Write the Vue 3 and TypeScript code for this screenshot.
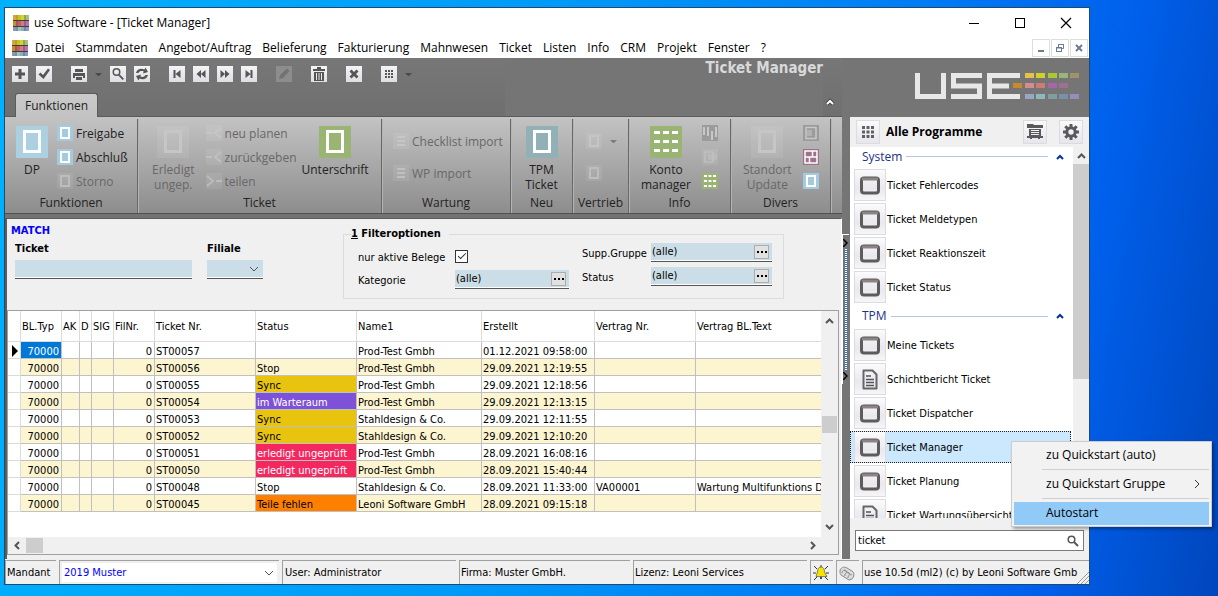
<script setup lang="ts">
import { ref } from 'vue'

interface Row {
  nr: string
  status: string
  tone: string
  name: string
  date: string
  contract: string
  text: string
}

interface Program {
  label: string
  icon: 'window' | 'document'
  selected?: boolean
}

const menus = ['Datei', 'Stammdaten', 'Angebot/Auftrag', 'Belieferung', 'Fakturierung', 'Mahnwesen', 'Ticket', 'Listen', 'Info', 'CRM', 'Projekt', 'Fenster', '?']

const glyphs: Record<string, string> = {
  plus: 'M6.500 3h3v3.500H13v3H9.500V13h-3V9.500H3v-3h3.500z',
  check: 'M2.500 8.500l2-2L7 9l5-6.500 2 1.500-6.500 9z',
  print: 'M4 3h8v3H4zM2 7h12v5h-2v-2H4v2H2zM5 11h6v3H5z',
  search: 'M6.500 2a4 4 0 1 0 0 8 4 4 0 0 0 0-8zm0 1.500a2.500 2.500 0 1 1 0 5 2.500 2.500 0 0 1 0-5zM8.500 9.800l1.300-1.300L14 12.700 12.700 14z',
  refresh: 'M2 7c1-4 5-5 8.500-3.500L11.500 1.500 14 6 9 7.500l.7-2C7.500 4.500 5.500 5 4.500 7zM14 9c-1 4-5 5-8.500 3.500L4.500 14.500 2 10l5-1.500-.7 2c2.200 1 4.200.5 5.200-1.500z',
  first: 'M4.500 4h2v8h-2zM11.500 4v8l-5-4z',
  prev: 'M8 4v8L3.500 8zM12.500 4v8L8 8z',
  next: 'M3.500 4v8L8 8zM8 4v8l4.500-4z',
  last: 'M9.500 4h2v8h-2zM4.500 4v8l5-4z',
  edit: 'M3 13l1-4 7-6.500 2.500 2.500L7 12z',
  trash: 'M6 1h4v2h4v2H2V3h4zM3 6h10v9H3zM5 7v7h1V7zM7.500 7v7h1V7zM10 7v7h1V7z',
  close: 'M3.500 5.500l2-2L8 6l2.500-2.500 2 2L10 8l2.500 2.500-2 2L8 10l-2.500 2.500-2-2L6 8z',
  grid: 'M4 4h2v2H4zM7 4h2v2H7zM10 4h2v2h-2zM4 7h2v2H4zM7 7h2v2H7zM10 7h2v2h-2zM4 10h2v2H4zM7 10h2v2H7zM10 10h2v2h-2z',
}

const toolGroups = [
  [{ g: 'plus', t: 'Neu' }, { g: 'check', t: 'Speichern' }],
  [{ g: 'print', t: 'Drucken', caret: true }, { g: 'search', t: 'Suchen' }, { g: 'refresh', t: 'Aktualisieren' }],
  [{ g: 'first', t: 'Erster' }, { g: 'prev', t: 'Zurück' }, { g: 'next', t: 'Weiter' }, { g: 'last', t: 'Letzter' }],
  [{ g: 'edit', t: 'Bearbeiten', off: true }],
  [{ g: 'trash', t: 'Löschen' }],
  [{ g: 'close', t: 'Abbrechen' }],
  [{ g: 'grid', t: 'Raster', caret: true }],
] as { g: string; t: string; caret?: boolean; off?: boolean }[][]

const logoBars: [number, number, string][] = [
  [110, 0, '#e8bf49'], [121, 0, '#cfd124'], [133, 0, '#a9c832'], [144, 0, '#98b67a'], [155, 0, '#a0926a'],
  [98, 10, '#c88b27'], [110, 10, '#d48c8c'], [121, 10, '#d07a72'], [133, 10, '#a865a8'], [144, 10, '#a07090'],
  [110, 21, '#98a8c4'], [121, 21, '#8fb8b8'], [133, 21, '#7ca0a0'], [144, 21, '#7890a8'], [155, 21, '#9090b8'],
]

const appTiles: [number, number, number, string][] = [
  [0, 0, 3, '#d9a43b'], [3, 0, 2, '#b8a030'], [5, 0, 3, '#c7c31f'], [8, 0, 3, '#d2d62c'], [11, 0, 2, '#8aa860'], [13, 0, 3, '#a8c07c'],
  [0, 6, 3, '#c98a2a'], [3, 6, 2, '#a05a50'], [5, 6, 3, '#c0616a'], [8, 6, 3, '#cf7d84'], [11, 6, 2, '#a05a98'], [13, 6, 3, '#b478a8'],
  [0, 12, 3, '#8a97b8'], [3, 12, 2, '#7890a0'], [5, 12, 3, '#9cc0c4'], [8, 12, 3, '#88b0b4'], [11, 12, 2, '#7088a8'], [13, 12, 3, '#8e9ac0'],
]

const rows: Row[] = [
  { nr: 'ST00057', status: '', tone: '', name: 'Prod-Test Gmbh', date: '01.12.2021 09:58:00', contract: '', text: '' },
  { nr: 'ST00056', status: 'Stop', tone: '', name: 'Prod-Test Gmbh', date: '29.09.2021 12:19:55', contract: '', text: '' },
  { nr: 'ST00055', status: 'Sync', tone: 'sync', name: 'Prod-Test Gmbh', date: '29.09.2021 12:18:56', contract: '', text: '' },
  { nr: 'ST00054', status: 'im Warteraum', tone: 'wait', name: 'Prod-Test Gmbh', date: '29.09.2021 12:13:15', contract: '', text: '' },
  { nr: 'ST00053', status: 'Sync', tone: 'sync', name: 'Stahldesign & Co.', date: '29.09.2021 12:11:55', contract: '', text: '' },
  { nr: 'ST00052', status: 'Sync', tone: 'sync', name: 'Stahldesign & Co.', date: '29.09.2021 12:10:20', contract: '', text: '' },
  { nr: 'ST00051', status: 'erledigt ungeprüft', tone: 'done', name: 'Prod-Test Gmbh', date: '28.09.2021 16:08:16', contract: '', text: '' },
  { nr: 'ST00050', status: 'erledigt ungeprüft', tone: 'done', name: 'Prod-Test Gmbh', date: '28.09.2021 15:40:44', contract: '', text: '' },
  { nr: 'ST00048', status: 'Stop', tone: '', name: 'Stahldesign & Co.', date: '28.09.2021 11:33:00', contract: 'VA00001', text: 'Wartung Multifunktions Dr' },
  { nr: 'ST00045', status: 'Teile fehlen', tone: 'missing', name: 'Leoni Software GmbH', date: '28.09.2021 09:15:18', contract: '', text: '' },
]

const sections: { title: string; items: Program[] }[] = [
  {
    title: 'System',
    items: [
      { label: 'Ticket Fehlercodes', icon: 'window' },
      { label: 'Ticket Meldetypen', icon: 'window' },
      { label: 'Ticket Reaktionszeit', icon: 'window' },
      { label: 'Ticket Status', icon: 'window' },
    ],
  },
  {
    title: 'TPM',
    items: [
      { label: 'Meine Tickets', icon: 'window' },
      { label: 'Schichtbericht Ticket', icon: 'document' },
      { label: 'Ticket Dispatcher', icon: 'window' },
      { label: 'Ticket Manager', icon: 'window', selected: true },
      { label: 'Ticket Planung', icon: 'window' },
      { label: 'Ticket Wartungsübersicht', icon: 'document' },
    ],
  },
]

const ticket = ref('')
const activeOnly = ref(true)
const kategorie = ref('(alle)')
const gruppe = ref('(alle)')
const status = ref('(alle)')
const search = ref('ticket')
</script>

<template>
  <div class="desktop">
    <div class="window">
      <header class="titlebar">
        <svg class="appicon" viewBox="0 0 16 16"><rect width="16" height="16" fill="#4a3a35" /><rect v-for="(t, i) in appTiles" :key="i" :x="t[0]" :y="t[1]" :width="t[2]" :height="t[1] === 12 ? 4 : 5" :fill="t[3]" /></svg>
        <span class="caption">use Software - [Ticket Manager]</span>
        <button class="sysbtn" aria-label="Minimieren"><svg width="12" height="12" viewBox="0 0 12 12"><path d="M1 6.500h10" stroke="#000" /></svg></button>
        <button class="sysbtn" aria-label="Maximieren"><svg width="12" height="12" viewBox="0 0 12 12"><rect x="1.500" y="1.500" width="9" height="9" fill="none" stroke="#000" /></svg></button>
        <button class="sysbtn" aria-label="Schließen"><svg width="12" height="12" viewBox="0 0 12 12"><path d="M1 1l10 10M11 1L1 11" stroke="#000" stroke-width="1.200" /></svg></button>
      </header>

      <nav class="menubar">
        <svg class="appicon" viewBox="0 0 16 16"><rect width="16" height="16" fill="#4a3a35" /><rect v-for="(t, i) in appTiles" :key="i" :x="t[0]" :y="t[1]" :width="t[2]" :height="t[1] === 12 ? 4 : 5" :fill="t[3]" /></svg>
        <button v-for="m in menus" :key="m" class="menu">{{ m }}</button>
        <div class="mdi">
          <button aria-label="Fenster minimieren"><svg width="10" height="10" viewBox="0 0 10 10"><path d="M2 8h6" stroke="#6c7d8e" stroke-width="2" /></svg></button>
          <button aria-label="Fenster wiederherstellen"><svg width="10" height="10" viewBox="0 0 10 10" fill="none" stroke="#6c7d8e"><path d="M3.500 4V1.500h5v4H7M3 1.500h6" /><rect x="1.500" y="4.500" width="5" height="4" /><path d="M1 5h6" /></svg></button>
          <button aria-label="Fenster schließen"><svg width="10" height="10" viewBox="0 0 10 10"><path d="M2 2l6 6M8 2L2 8" stroke="#6c7d8e" stroke-width="2" /></svg></button>
        </div>
      </nav>

      <div class="body">
        <main class="left">
          <div class="head">
            <div class="head-main">
              <div class="toolbar">
                <div v-for="(grp, gi) in toolGroups" :key="gi" class="tools">
                  <template v-for="b in grp" :key="b.g">
                    <button class="tool" :class="{ off: b.off }" :disabled="b.off" :aria-label="b.t"><svg viewBox="0 0 16 16"><path fill-rule="evenodd" :d="glyphs[b.g]" /></svg></button>
                    <span v-if="b.caret" class="caret"></span>
                  </template>
                </div>
              </div>
              <button class="tab">Funktionen</button>
            </div>
            <h1>Ticket Manager</h1>
            <button class="collapse" aria-label="Menüband reduzieren"><svg width="10" height="8" viewBox="0 0 10 8"><path d="M2 6l3-3 3 3" fill="none" stroke="#444" stroke-width="4" /><path d="M2 6l3-3 3 3" fill="none" stroke="#fff" stroke-width="2" /></svg></button>
          </div>

          <div class="ribbon">
            <section class="group g-fn">
              <div class="cmds">
                <button class="big"><svg class="i32" viewBox="0 0 32 32"><rect width="32" height="32" fill="#add0e0" /><rect x="8.500" y="5.500" width="15" height="20" fill="none" stroke="#fff" stroke-width="3" /></svg><span>DP</span></button>
                <div class="stack">
                  <button class="small"><svg class="i16" viewBox="0 0 16 16"><rect width="16" height="16" fill="#a4cbdd" /><rect x="4" y="3" width="8" height="10" fill="none" stroke="#fff" stroke-width="2" /></svg>Freigabe</button>
                  <button class="small"><svg class="i16" viewBox="0 0 16 16"><rect width="16" height="16" fill="#a4cbdd" /><rect x="4" y="3" width="8" height="10" fill="none" stroke="#fff" stroke-width="2" /></svg>Abschluß</button>
                  <button class="small" disabled><svg class="i16 dim" viewBox="0 0 16 16"><rect width="16" height="16" /><rect x="4" y="3" width="8" height="10" fill="none" stroke="#bdbdbd" stroke-width="2" /></svg>Storno</button>
                </div>
              </div>
              <h2>Funktionen</h2>
            </section>

            <section class="group g-ticket">
              <div class="cmds">
                <button class="big" disabled><svg class="i32 dim" viewBox="0 0 32 32"><rect width="32" height="32" /><rect x="8.500" y="5.500" width="15" height="20" fill="none" stroke="#c6c6c6" stroke-width="3" /></svg><span>Erledigt<br />ungep.</span></button>
                <div class="stack">
                  <button class="small" disabled><svg class="i16 dim" viewBox="0 0 16 16"><rect width="16" height="16" /><path d="M0 8h6M15 3L9 8l6 5" fill="none" stroke="#c6c6c6" stroke-width="2" /></svg>neu planen</button>
                  <button class="small" disabled><svg class="i16 dim" viewBox="0 0 16 16"><rect width="16" height="16" /><path d="M0 8h6M15 3L9 8l6 5" fill="none" stroke="#c0c0c0" stroke-width="2" /></svg>zurückgeben</button>
                  <button class="small" disabled><svg class="i16 dim" viewBox="0 0 16 16"><rect width="16" height="16" /><path d="M16 8h-6M1 3l6 5-6 5" fill="none" stroke="#bcbcbc" stroke-width="2" /></svg>teilen</button>
                </div>
                <button class="big sign"><svg class="i32" viewBox="0 0 32 32"><rect width="32" height="32" fill="#9ab474" /><rect x="8.500" y="5.500" width="15" height="20" fill="none" stroke="#fff" stroke-width="3" /></svg><span>Unterschrift</span></button>
              </div>
              <h2>Ticket</h2>
            </section>

            <section class="group g-wartung">
              <div class="cmds">
                <div class="stack two">
                  <button class="small" disabled><svg class="i16 dim" viewBox="0 0 16 16"><rect width="16" height="16" /><path d="M4 4h8M4 8h8M4 12h8" stroke="#c6c6c6" stroke-width="2" /></svg>Checklist import</button>
                  <button class="small" disabled><svg class="i16 dim" viewBox="0 0 16 16"><rect width="16" height="16" /><path d="M4 4h8M4 8h8M4 12h8" stroke="#c0c0c0" stroke-width="2" /></svg>WP import</button>
                </div>
              </div>
              <h2>Wartung</h2>
            </section>

            <section class="group g-neu">
              <div class="cmds">
                <button class="big"><svg class="i32" viewBox="0 0 32 32"><rect width="32" height="32" fill="#91b1b7" /><rect x="8.500" y="5.500" width="15" height="20" fill="none" stroke="#fff" stroke-width="3" /></svg><span>TPM<br />Ticket</span></button>
              </div>
              <h2>Neu</h2>
            </section>

            <section class="group g-vertrieb">
              <div class="cmds">
                <div class="stack two">
                  <button class="small" disabled aria-label="Angebot"><svg class="i16 dim" viewBox="0 0 16 16"><rect width="16" height="16" /><rect x="4" y="3" width="8" height="10" fill="none" stroke="#c6c6c6" stroke-width="2" /></svg><span class="caret light"></span></button>
                  <button class="small" disabled aria-label="Auftrag"><svg class="i16 dim" viewBox="0 0 16 16"><rect width="16" height="16" /><rect x="4" y="3" width="8" height="10" fill="none" stroke="#bebebe" stroke-width="2" /></svg></button>
                </div>
              </div>
              <h2>Vertrieb</h2>
            </section>

            <section class="group g-info">
              <div class="cmds">
                <button class="big"><svg class="i32" viewBox="0 0 32 32"><rect width="32" height="32" fill="#9ab474" /><path d="M4 6.500h24M4 15.500h24M4 24.500h24" stroke="#fff" stroke-width="3" stroke-dasharray="6 3" /></svg><span>Konto<br />manager</span></button>
                <div class="stack">
                  <button class="small" disabled aria-label="Statistik"><svg class="i16 dark" viewBox="0 0 16 16"><rect width="16" height="16" /><path d="M2 2v8M6 2v9M10 6v9M14 2v10" stroke="#c8c8c8" stroke-width="2" /></svg></button>
                  <button class="small" disabled aria-label="Export"><svg class="i16 dim" viewBox="0 0 16 16"><rect width="16" height="16" /><path d="M11 3H3v10h8M6 6h5M11 6h4M6 8h9M6 10h9M11 3v10" fill="none" stroke="#c4c4c4" stroke-width="1.200" /></svg></button>
                  <button class="small" aria-label="Raster"><svg class="i16" viewBox="0 0 16 16"><rect width="16" height="16" fill="#9ab474" /><path d="M2 3h12M2 8h12M2 13h12" stroke="#fff" stroke-width="2" stroke-dasharray="3 1.500" /></svg></button>
                </div>
              </div>
              <h2>Info</h2>
            </section>

            <section class="group g-divers">
              <div class="cmds">
                <button class="big" disabled><svg class="i32 dim" viewBox="0 0 32 32"><rect width="32" height="32" /><rect x="8.500" y="5.500" width="15" height="20" fill="none" stroke="#c6c6c6" stroke-width="3" /></svg><span>Standort<br />Update</span></button>
                <div class="stack">
                  <button class="small" disabled aria-label="Protokoll"><svg class="i16 dark" viewBox="0 0 16 16"><rect width="16" height="16" /><rect x="3" y="2.500" width="10" height="11" fill="none" stroke="#c8c8c8" stroke-width="1.500" /><path d="M4 6h5M4 8h5M4 10h5" stroke="#c8c8c8" /></svg></button>
                  <button class="small" aria-label="Kacheln"><svg class="i16" viewBox="0 0 16 16"><rect width="16" height="16" fill="#a0708c" /><rect x="2" y="2" width="12" height="12" fill="none" stroke="#fff" stroke-width="1.500" /><path d="M9.500 2v6M6.500 8v6M2 8h12" stroke="#fff" stroke-width="1.500" /></svg></button>
                  <button class="small" aria-label="Blatt"><svg class="i16" viewBox="0 0 16 16"><rect width="16" height="16" fill="#a4cbdd" /><rect x="4" y="3" width="8" height="10" fill="none" stroke="#fff" stroke-width="2" /></svg></button>
                </div>
              </div>
              <h2>Divers</h2>
            </section>
          </div>

          <div class="sheet">
            <form class="filter" @submit.prevent>
              <div class="match">
                <strong class="blue">MATCH</strong>
                <div class="pair">
                  <div class="field"><label for="ticket">Ticket</label><input id="ticket" v-model="ticket" class="flat" type="text" /></div>
                  <div class="field narrow"><label for="filiale">Filiale</label>
                    <div class="drop"><select id="filiale"><option></option></select><svg width="10" height="6" viewBox="0 0 10 6"><path d="M1 1l4 4 4-4" fill="none" stroke="#555" /></svg></div>
                  </div>
                </div>
              </div>
              <fieldset>
                <legend><u>1</u> Filteroptionen</legend>
                <div class="opts a">
                  <label for="aktiv">nur aktive Belege</label><input id="aktiv" v-model="activeOnly" type="checkbox" />
                  <label for="kat">Kategorie</label><div class="lookup"><input id="kat" v-model="kategorie" type="text" /><button type="button" aria-label="Kategorie wählen"><i></i><i></i><i></i></button></div>
                </div>
                <div class="opts b">
                  <label for="grp">Supp.Gruppe</label><div class="lookup"><input id="grp" v-model="gruppe" type="text" /><button type="button" aria-label="Gruppe wählen"><i></i><i></i><i></i></button></div>
                  <label for="sta">Status</label><div class="lookup"><input id="sta" v-model="status" type="text" /><button type="button" aria-label="Status wählen"><i></i><i></i><i></i></button></div>
                </div>
              </fieldset>
            </form>

            <div class="gridbox">
              <div class="gridmain">
                <div class="gridview">
                  <table>
                    <colgroup><col class="c0" /><col class="c1" /><col class="c2" /><col class="c3" /><col class="c4" /><col class="c5" /><col class="c6" /><col class="c6" /><col class="c8" /><col class="c9" /><col class="c6" /><col /></colgroup>
                    <thead>
                      <tr><th></th><th>BL.Typ</th><th>AK</th><th>D</th><th>SIG</th><th>FilNr.</th><th>Ticket Nr.</th><th>Status</th><th>Name1</th><th>Erstellt</th><th>Vertrag Nr.</th><th>Vertrag BL.Text</th></tr>
                    </thead>
                    <tbody>
                      <tr v-for="(r, i) in rows" :key="r.nr">
                        <td class="mark"><svg v-if="i === 0" width="6" height="12" viewBox="0 0 6 12"><path d="M0 0l6 6-6 6z" /></svg></td>
                        <td class="num" :class="{ current: i === 0 }">70000</td><td></td><td></td><td></td><td class="num">0</td>
                        <td>{{ r.nr }}</td><td :class="r.tone">{{ r.status }}</td><td>{{ r.name }}</td><td>{{ r.date }}</td><td>{{ r.contract }}</td><td>{{ r.text }}</td>
                      </tr>
                    </tbody>
                  </table>
                </div>
                <div class="vscroll">
                  <svg width="9" height="6" viewBox="0 0 9 6"><path d="M1 5l3.500-3.500L8 5" fill="none" stroke="#555" stroke-width="2" /></svg>
                  <div class="track"><div class="thumb"></div></div>
                  <svg width="9" height="6" viewBox="0 0 9 6"><path d="M1 1l3.500 3.500L8 1" fill="none" stroke="#555" stroke-width="2" /></svg>
                </div>
              </div>
              <div class="hscroll">
                <svg width="6" height="9" viewBox="0 0 6 9"><path d="M5 1L1.500 4.500 5 8" fill="none" stroke="#555" stroke-width="2" /></svg>
                <div class="hthumb"></div>
                <svg class="end" width="6" height="9" viewBox="0 0 6 9"><path d="M1 1l3.500 3.500L1 8" fill="none" stroke="#555" stroke-width="2" /></svg>
              </div>
            </div>
          </div>
        </main>

        <div class="split">
          <div class="grip">
            <svg width="5" height="8" viewBox="0 0 5 8"><path d="M0 0l4 4-4 4" fill="none" stroke="#000" stroke-width="1.500" /></svg>
            <div class="dots"></div>
            <svg width="5" height="8" viewBox="0 0 5 8"><path d="M0 0l4 4-4 4" fill="none" stroke="#000" stroke-width="1.500" /></svg>
          </div>
        </div>

        <aside class="side">
          <div class="brand">
            <svg width="165" height="26" viewBox="0 0 165 26" role="img" aria-label="USE">
              <g fill="none" stroke="#e8e8e8" stroke-width="5">
                <path d="M2.500 0v23.500h26V0" /><path d="M67 2.500H38.500v10.500h26v10.500H36" /><path d="M105 2.500H74.500v21h30.500M74 13h20" />
              </g>
              <rect v-for="(b, i) in logoBars" :key="i" :x="b[0]" :y="b[1]" width="9" height="5" :fill="b[2]" />
            </svg>
          </div>
          <div class="sidehead">
            <button class="sq" aria-label="Übersicht"><svg viewBox="0 0 16 16"><path d="M2 2h3v3H2zM6.500 2h3v3h-3zM11 2h3v3h-3zM2 6.500h3v3H2zM6.500 6.500h3v3h-3zM11 6.500h3v3h-3zM2 11h3v3H2zM6.500 11h3v3h-3zM11 11h3v3h-3z" fill="#606060" /></svg></button>
            <strong>Alle Programme</strong>
            <button class="sq" aria-label="Ordner"><svg viewBox="0 0 16 16"><path fill-rule="evenodd" fill="#5a5a5a" d="M0 0h6l1 1h9v3H0zM2 5h12v7h2v2h-3v1h-2v-1H5v1H3v-1H0v-2h2zM4 6v1h8V6zM4 8v1h8V8zM4 10v1h8v-1z" /></svg></button>
            <button class="sq" aria-label="Einstellungen"><svg viewBox="0 0 16 16"><circle cx="8" cy="8" r="4.200" fill="none" stroke="#5a5a5a" stroke-width="3" /><path d="M8 0v3M8 13v3M0 8h3M13 8h3M2.300 2.300l2.200 2.200M11.500 11.500l2.200 2.200M2.300 13.700l2.200-2.200M11.500 4.500l2.200-2.200" stroke="#5a5a5a" stroke-width="3" /></svg></button>
          </div>
          <div class="programs">
            <div class="list">
              <section v-for="s in sections" :key="s.title">
                <h3><span>{{ s.title }}</span><svg width="8" height="6" viewBox="0 0 8 6"><path d="M1 5l3-3 3 3" fill="none" stroke="#039" stroke-width="2" /></svg></h3>
                <button v-for="p in s.items" :key="p.label" class="prog" :class="{ selected: p.selected }">
                  <span class="tile">
                    <svg v-if="p.icon === 'window'" viewBox="0 0 22 22"><rect x="2.500" y="4" width="17" height="15" rx="2.500" fill="none" stroke="#5f5b5b" stroke-width="3" /><path d="M3 5h16" stroke="#8a8484" stroke-width="3" /></svg>
                    <svg v-else viewBox="0 0 22 22"><path d="M4.500 2.500h9l4 4v14h-13z" fill="none" stroke="#666" stroke-width="2" stroke-linejoin="round" /><path d="M7 8h5M7 11.500h8M7 14.500h8M7 17.500h8" stroke="#555" stroke-width="1.500" /></svg>
                  </span>
                  <span class="pname">{{ p.label }}</span>
                </button>
              </section>
            </div>
            <div class="sidescroll">
              <svg width="9" height="6" viewBox="0 0 9 6"><path d="M1 5l3.500-3.500L8 5" fill="none" stroke="#555" stroke-width="2" /></svg>
              <div class="sidethumb"></div>
            </div>
          </div>
          <div class="find">
            <label>
              <input v-model="search" type="text" aria-label="Programm suchen" />
              <svg width="12" height="12" viewBox="0 0 12 12"><circle cx="4.500" cy="4.500" r="3.300" fill="none" stroke="#555" stroke-width="1.500" /><path d="M7 7l4 4" stroke="#555" stroke-width="2" /></svg>
            </label>
          </div>
        </aside>
      </div>

      <footer class="status">
        <label class="pane mandant" for="mandant">Mandant</label>
        <div class="pane choose"><select id="mandant"><option>2019 Muster</option></select><svg width="10" height="6" viewBox="0 0 10 6"><path d="M1 1l4 4 4-4" fill="none" stroke="#555" /></svg></div>
        <div class="pane user">User: Administrator</div>
        <div class="pane firm">Firma: Muster GmbH.</div>
        <div class="pane lic">Lizenz: Leoni Services</div>
        <div class="pane ico"><svg width="16" height="16" viewBox="0 0 16 16"><path d="M1 1l3 3M15 1l-3 3M0 8h3M13 8h3M1 15l3-3M15 15l-3-3M8 0v2" stroke="#333" /><path d="M8 2c3 0 3.500 3 3.500 5L14 11.500H3L4.500 7C4.500 5 5 2 8 2z" fill="#f4e400" stroke="#555" stroke-width="0.700" /><path d="M7 12h2v2H7z" fill="#444" /></svg></div>
        <div class="pane ico"><svg width="16" height="16" viewBox="0 0 16 16" fill="none" stroke="#8a8a8a"><path d="M1 6c0-3 4-5 7-3l5 3c3 2 2 6 0 8l-3 1-8-5C1 9 1 8 1 6z" fill="#ddd" /><path d="M3 8c0-3 4-4 5-1M6 11c-1-3 3-5 5-2M9 13c0-3 2-4 4-3M5 5l6 4" /></svg></div>
        <div class="pane ver">use 10.5d (ml2) (c) by Leoni Software Gmb</div>
        <svg class="sizer" width="12" height="12" viewBox="0 0 12 12"><path d="M0 12L12 0M4 12l8-8M8 12l4-4" stroke="#999" /></svg>
      </footer>
    </div>

    <div class="context" role="menu">
      <button role="menuitem">zu Quickstart (auto)</button>
      <hr />
      <button role="menuitem">zu Quickstart Gruppe<svg width="6" height="8" viewBox="0 0 6 8"><path d="M1 0l4 4-4 4" fill="none" stroke="#333" /></svg></button>
      <hr />
      <button role="menuitem" class="hot">Autostart</button>
    </div>
  </div>
</template>

<style>
body { margin: 0; }
</style>

<style scoped>
.desktop {
  --ui: "Open Sans", "Noto Sans", sans-serif;
  --form: "DejaVu Sans Condensed", "DejaVu Sans", sans-serif;
  position: relative;
  box-sizing: border-box;
  display: flex;
  height: 100vh;
  padding: 7px 128px 11px 4px;
  background: linear-gradient(100deg, #00b2fd 0%, #009af8 42%, #007cf4 70%, #0060ec 86%, #0046bc 100%);
  font: 11px/16px var(--form);
  color: #000;
}
.desktop *, .desktop *::before { box-sizing: border-box; }
button, input, select { margin: 0; padding: 0; border: 0; border-radius: 0; background: none; font: inherit; color: inherit; }
button { white-space: nowrap; }
select { appearance: none; }
h1, h2, h3 { margin: 0; font-weight: normal; }
svg { display: block; flex: none; }

.window { flex: 1; min-width: 0; display: flex; flex-direction: column; border: 1px solid #1c4a72; background: #f0f0f0; }
.titlebar { display: flex; align-items: center; height: 30px; padding: 0 0 0 8px; background: #fff; font: 12px/16px var(--ui); }
.appicon { width: 16px; height: 16px; }
.caption { flex: 1; margin-left: 5px; }
.sysbtn { display: grid; place-items: center; width: 46px; height: 28px; }
.menubar { display: flex; align-items: center; height: 20px; padding: 0 1px 0 7px; background: #fff; font: 12px/16px var(--ui); }
.menubar .appicon { margin-right: 7px; }
.menu { margin-right: 11px; }
.mdi { display: flex; gap: 1px; margin-left: auto; }
.mdi button { display: grid; place-items: center; width: 18px; height: 18px; border: 1px solid #ddd; }

.body { flex: 1; min-height: 0; display: flex; }
.left { flex: 1; min-width: 0; display: flex; flex-direction: column; background: #737373; }
.head { display: flex; height: 59px; background: linear-gradient(#777, #6f6f6f); border-bottom: 1px solid #5b5b5b; }
.head-main { width: 500px; display: flex; flex-direction: column; justify-content: space-between; align-items: flex-start; padding: 8px 0 0 7px; }
.toolbar { display: flex; gap: 19px; }
.tools { display: flex; align-items: center; gap: 8px; }
.tool { width: 16px; height: 16px; background: linear-gradient(#f4f4f6, #dedee4); }
.tool svg { width: 16px; height: 16px; fill: #555; }
.tool.off { background: #8d8d8d; }
.tool.off svg { fill: #737373; }
.caret { width: 7px; border: solid transparent; border-width: 3px 3px 0; border-top-color: #4a4a4a; }
.caret.light { border-top-color: #7d7d7d; margin-left: 5px; }
.tab { height: 24px; margin: 0 0 -1px 3px; padding: 0 9px; border: 1px solid #5b5b5b; border-bottom: 0; border-radius: 3px 3px 0 0; background: linear-gradient(#cbcbcb, #c2c2c2); font: 12px/20px var(--ui); color: #222; }
.head h1 { flex: 1; text-align: right; background: #757575; font: bold 15px/20px var(--form); color: #d9d9d9; }
.collapse { width: 19px; display: flex; align-items: flex-end; justify-content: center; padding: 0 5px 10px 0; }

.ribbon { display: flex; height: 97px; padding-top: 2px; border-bottom: 1px solid #505050; background: linear-gradient(#c3c3c3, #8d8d8d); font: 12px/15px var(--ui); color: #222; }
.group { flex: none; display: flex; flex-direction: column; justify-content: space-between; border-right: 1px solid #686868; box-shadow: 1px 0 #b4b4b4; }
.group h2 { font: 12px/15px var(--ui); text-align: center; padding-bottom: 3px; }
.cmds { display: flex; gap: 8px; padding: 6px 0 0 10px; }
.g-fn { width: 133px; }
.g-ticket { width: 244px; }
.g-wartung { width: 129px; }
.g-neu { width: 62px; }
.g-vertrieb { width: 56px; }
.g-info { width: 102px; }
.g-divers { width: 100px; }
.big { display: flex; flex-direction: column; align-items: center; gap: 4px; min-width: 34px; padding-top: 1px; align-self: flex-start; }
.small { display: flex; align-items: center; gap: 3px; height: 16px; }
.stack { display: flex; flex-direction: column; gap: 8px; }
.stack.two { gap: 16px; padding-top: 8px; }
button:disabled { color: #686868; }
.i32 { width: 32px; height: 32px; }
.i16 { width: 16px; height: 16px; }
.dim rect:first-child { fill: #fff; fill-opacity: 0.08; }
.dark rect:first-child { fill: #9b9b9b; }
.g-ticket .cmds { padding-left: 14px; gap: 11px; }
.g-ticket .stack { width: 85px; }
.g-wartung .cmds { padding-left: 11px; }
.g-neu .cmds { justify-content: center; padding-left: 0; }
.g-vertrieb .cmds { padding-left: 13px; }
.g-info .cmds, .g-divers .cmds { padding-left: 12px; gap: 11px; }

.sheet { flex: 1; min-height: 0; display: flex; flex-direction: column; margin-top: 4px; border: solid #5c5c5c; border-width: 1px 0 0 2px; background: #f0f0f0; border-right: 1px solid #fff; }
.filter { display: flex; align-items: flex-start; gap: 80px; height: 91px; padding: 4px 57px 0 4px; }
.match { display: flex; flex-direction: column; }
.blue { color: #00f; }
.pair { display: flex; gap: 15px; padding: 2px 0 0 4px; }
.field { display: flex; flex-direction: column; gap: 3px; width: 177px; }
.field.narrow { width: 56px; }
.field label { font-weight: bold; }
.flat, .drop, .lookup { height: 19px; background: #cbdde6; border-bottom: 1px solid #555; box-shadow: inset 0 -1px #fff; }
.drop { position: relative; display: flex; align-items: center; }
.drop select { width: 100%; height: 100%; }
.drop svg { position: absolute; right: 4px; pointer-events: none; }
fieldset { flex: 1; min-width: 0; display: flex; justify-content: space-between; height: 72px; margin: 4px 0 0; padding: 0 11px 0 14px; border: 1px solid #dcdcdc; }
legend { margin-left: -7px; padding: 0 8px 0 0; font-weight: bold; line-height: 14px; }
.opts { display: grid; align-items: center; align-content: start; }
.opts label { padding-top: 3px; }
.opts.a { grid-template-columns: 97px 114px; grid-template-rows: 20px 20px; row-gap: 3px; padding-top: 5px; }
.opts.b { grid-template-columns: 69px 121px; row-gap: 5px; padding-top: 2px; }
input[type="checkbox"] { appearance: none; width: 13px; height: 13px; border: 1px solid #333; background: #fff; display: grid; place-items: center; }
input[type="checkbox"]:checked::before { content: ""; width: 8px; height: 4px; margin-top: -3px; border: solid #333; border-width: 0 0 1px 1px; transform: rotate(-45deg); }
.lookup { display: flex; align-items: center; padding-right: 3px; }
.lookup input { flex: 1; min-width: 0; padding-left: 1px; }
.lookup button { display: flex; justify-content: center; align-items: center; gap: 2px; width: 15px; height: 14px; border: 1px solid #adadad; background: #e1e1e1; }
.lookup i { width: 2px; height: 2px; background: #000; }

.gridbox { flex: 1; min-height: 0; display: flex; flex-direction: column; border: 1px solid #a0a0a0; background: #fff; margin: 0 2px 4px 0; }
.gridmain { flex: 1; min-height: 0; display: flex; }
.gridview { flex: 1; min-width: 0; overflow: hidden; }
table { width: 100%; table-layout: fixed; border-collapse: separate; border-spacing: 0; }
.c0 { width: 13px; } .c1 { width: 41px; } .c2 { width: 18px; } .c3 { width: 12px; } .c4 { width: 22px; } .c5 { width: 41px; } .c6 { width: 101px; } .c8 { width: 125px; } .c9 { width: 113px; }
th, td { padding: 0 1px; border: solid #c0c0c0; border-width: 0 1px 1px 0; overflow: hidden; white-space: nowrap; text-align: left; font-weight: normal; }
th:last-child, td:last-child { border-right: 0; }
th { height: 31px; padding-top: 2px; border-color: #dcdcdc; }
td { height: 17px; padding-top: 3px; line-height: 13px; }
tbody tr:nth-child(even) td { background: #fdf4d0; }
tbody tr td.mark { padding: 1px 0 0 4px; background: #fff; border-color: #dcdcdc; }
td.num { text-align: right; padding-right: 2px; }
td.current { background: #0078d7; color: #fff; }
tbody tr td.sync { background: #e8c40e; }
tbody tr td.wait { background: #7d51d8; color: #fff; }
tbody tr td.done { background: #f4285f; color: #fff; }
tbody tr td.missing { background: #ff8000; }
.vscroll { width: 17px; display: flex; flex-direction: column; align-items: center; padding: 7px 0; background: #f0f0f0; }
.track { flex: 1; width: 100%; padding-top: 92px; }
.thumb { margin: 0 1px; height: 17px; background: #cdcdcd; }
.hscroll { display: flex; align-items: center; gap: 11px; height: 17px; padding: 0 22px 0 6px; background: #f0f0f0; }
.hthumb { width: 17px; height: 15px; background: #cdcdcd; margin-left: -5px; }
.end { margin-left: auto; }

.split { width: 8px; background: #757575; padding-top: 176px; }
.grip { display: flex; flex-direction: column; width: 7px; height: 150px; padding: 4px 0; border: 1px solid #fff; border-width: 1px 0 0 1px; }
.dots { flex: 1; width: 2px; margin: 2px 2px; background: repeating-linear-gradient(#fff 0 1px, #2a7fc8 1px 2px); }

.side { width: 239px; display: flex; flex-direction: column; }
.brand { flex: none; height: 59px; padding: 15px 9px 0 0; background: #757575; }
.brand svg { margin-left: auto; }
.sidehead { flex: none; display: flex; align-items: center; gap: 6px; height: 30px; padding: 0 6px; }
.sidehead strong { flex: 1; font: bold 12px/16px var(--ui); }
.sq { display: grid; place-items: center; width: 24px; height: 24px; border: 1px solid #dcdce0; background: linear-gradient(#fafafc, #e6e6ec); }
.sq + .sq { margin-left: 6px; }
.sq svg { width: 16px; height: 16px; }
.programs { flex: 1; min-height: 0; display: flex; overflow: hidden; background: #fff; }
.list { flex: 1; min-width: 0; }
h3 { display: flex; align-items: center; height: 21px; padding: 0 9px 2px 12px; font: 12px/16px var(--ui); color: #1e3287; }
section + section h3 { height: 24px; padding-bottom: 0; }
h3 span { flex: 1; display: flex; align-items: center; gap: 4px; }
h3 span::after { content: ""; flex: 1; height: 1px; margin-right: 8px; background: #b8c6e6; }
.prog { display: flex; align-items: center; gap: 1px; width: 100%; height: 34px; padding: 0 0 0 4px; text-align: left; }
.prog.selected { height: 32px; margin: 1px 0; background: #cce8ff; outline: 1px dotted #222; outline-offset: -1px; width: 221px; }
.tile { display: grid; place-items: center; width: 32px; height: 32px; border: 1px solid #dcdce0; background: linear-gradient(#fbfbfc, #e8e8ee 60%, #f6f6f8); }
.pname { padding-top: 1px; }
.tile svg { width: 22px; height: 22px; }
.sidescroll { width: 16px; display: flex; flex-direction: column; align-items: center; gap: 5px; padding-top: 6px; background: #f0f0f0; }
.sidethumb { width: 100%; height: 215px; background: #cdcdcd; }
.find { flex: none; padding: 12px 5px 8px; }
.find label { display: flex; align-items: center; height: 21px; padding-right: 4px; border: 1px solid #7a7a7a; background: #fff; }
.find input { flex: 1; min-width: 0; padding-left: 2px; outline: 0; }

.status { position: relative; flex: none; display: flex; gap: 3px; height: 25px; padding-top: 1px; }
.pane { flex: none; display: flex; align-items: center; padding-left: 1px; border: 1px solid #a0a0a0; border-width: 1px 0 0 1px; white-space: nowrap; }
.mandant { width: 51px; }
.choose { position: relative; width: 220px; padding: 2px; color: #00f; }
.choose select { width: 100%; height: 100%; padding-left: 2px; background: #fff; }
.choose svg { position: absolute; right: 5px; pointer-events: none; }
.user { width: 174px; padding-left: 2px; }
.firm { width: 171px; }
.lic { flex: 1; min-width: 0; }
.ico { width: 23px; padding-left: 2px; }
.ver { width: 227px; }
.sizer { position: absolute; right: 0; bottom: 0; }

.context { position: absolute; top: 441px; right: 6px; width: 201px; height: 86px; padding: 2px; border: 1px solid #ccc; background: #f2f2f2; box-shadow: 2px 2px 3px rgba(0, 0, 0, 0.35); font: 12px/16px var(--ui); }
.context button { display: flex; align-items: center; justify-content: space-between; width: 100%; height: 23px; padding: 0 9px 1px 32px; }
.context hr { height: 1px; margin: 2px 0 3px 28px; border: 0; background: #d0d0d0; }
.context .hot { background: #91c9f7; }
</style>
